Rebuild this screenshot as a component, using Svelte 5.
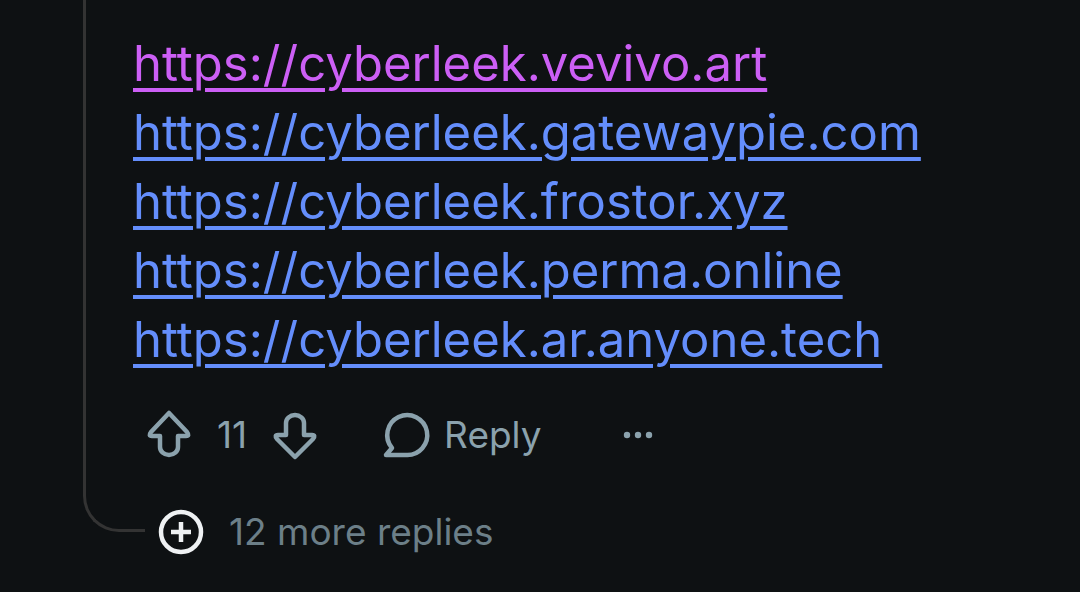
<script>
    let links = [
        { host: 'cyberleek.vevivo.art', visited: true },
        { host: 'cyberleek.gatewaypie.com', visited: false },
        { host: 'cyberleek.frostor.xyz', visited: false },
        { host: 'cyberleek.perma.online', visited: false },
        { host: 'cyberleek.ar.anyone.tech', visited: false }
    ];
    let score = 11;
    let moreReplies = 12;
</script>

<main>
    <div class="thread">
        <div class="thread-line"></div>

        <article class="comment">
            <div class="links">
                {#each links as link}
                    <a class="link" class:visited={link.visited} href={'https://' + link.host}>https://{link.host}</a>
                {/each}
            </div>

            <div class="actions">
                <button class="icon-button" aria-label="Upvote">
                    <svg width="44" height="48" viewBox="0 0 44 48">
                        <path d="M22 3 L40 22 Q43 26 39 26 H31 V37 A9 8 0 0 1 13 37 V26 H5 Q1 26 4 22 Z" />
                    </svg>
                </button>
                <span class="score">{score}</span>
                <button class="icon-button" aria-label="Downvote">
                    <svg width="44" height="48" viewBox="0 0 44 48">
                        <path d="M22 47 L40 29 Q43 25 39 25 H31 V13 A9 8 0 0 0 13 13 V25 H5 Q1 25 4 29 Z" />
                    </svg>
                </button>
                <button class="reply">
                    <svg width="48" height="48" viewBox="0 0 48 48">
                        <path d="M24 45 H4 L10 38 A20 20 0 1 1 24 45 Z" />
                    </svg>
                    Reply
                </button>
                <button class="icon-button more" aria-label="More options">
                    <svg width="32" height="48" viewBox="0 0 32 48">
                        <circle cx="5" cy="25" r="3.2" />
                        <circle cx="16" cy="25" r="3.2" />
                        <circle cx="27" cy="25" r="3.2" />
                    </svg>
                </button>
            </div>
        </article>

        <button class="more-replies">
            <svg width="44" height="44" viewBox="0 0 44 44">
                <circle cx="22" cy="22" r="20" />
                <path d="M22 12 V32 M12 22 H32" />
            </svg>
            {moreReplies} more replies
        </button>
    </div>
</main>

<style>
    :global(body) {
        margin: 0;
        background-color: #0e1113;
        font-family: Inter, 'Liberation Sans', sans-serif;
    }

    .thread {
        position: relative;
        padding: 29px 24px 36px 133px;
    }

    /* Line that ties the comment to its replies */
    .thread-line {
        position: absolute;
        top: 0;
        left: 83px;
        width: 59px;
        height: 529px;
        border-left: 3px solid #333333;
        border-bottom: 3px solid #333333;
        border-bottom-left-radius: 36px;
    }

    .links {
        display: flex;
        flex-direction: column;
        align-items: flex-start;
    }

    .link {
        color: #648efc;
        font-size: 49px;
        line-height: 69px;
        text-decoration: underline;
        text-decoration-thickness: 4px;
        text-underline-offset: 7px;
    }

    .visited {
        color: #cc5ff5;
    }

    .actions {
        display: flex;
        align-items: center;
        height: 48px;
        margin-top: 36px;
        padding-left: 14px;
        color: #8ba2ad;
        font-size: 37px;
    }

    button {
        display: flex;
        align-items: center;
        padding: 0;
        border: none;
        background: none;
        color: inherit;
        font: inherit;
        cursor: pointer;
    }

    svg {
        overflow: visible;
        fill: none;
        stroke: currentColor;
        stroke-width: 4.5px;
        stroke-linejoin: round;
    }

    .score {
        margin: 0 26px;
    }

    .reply {
        gap: 14px;
        margin-left: 65px;
    }

    .more {
        margin-left: 80px;
    }

    .more circle {
        fill: currentColor;
        stroke: none;
    }

    .more-replies {
        position: relative;
        gap: 26px;
        margin: 51px 0 0 26px;
        color: #6c7f88;
        font-size: 37px;
    }

    .more-replies svg {
        color: #eef1f3;
    }
</style>
